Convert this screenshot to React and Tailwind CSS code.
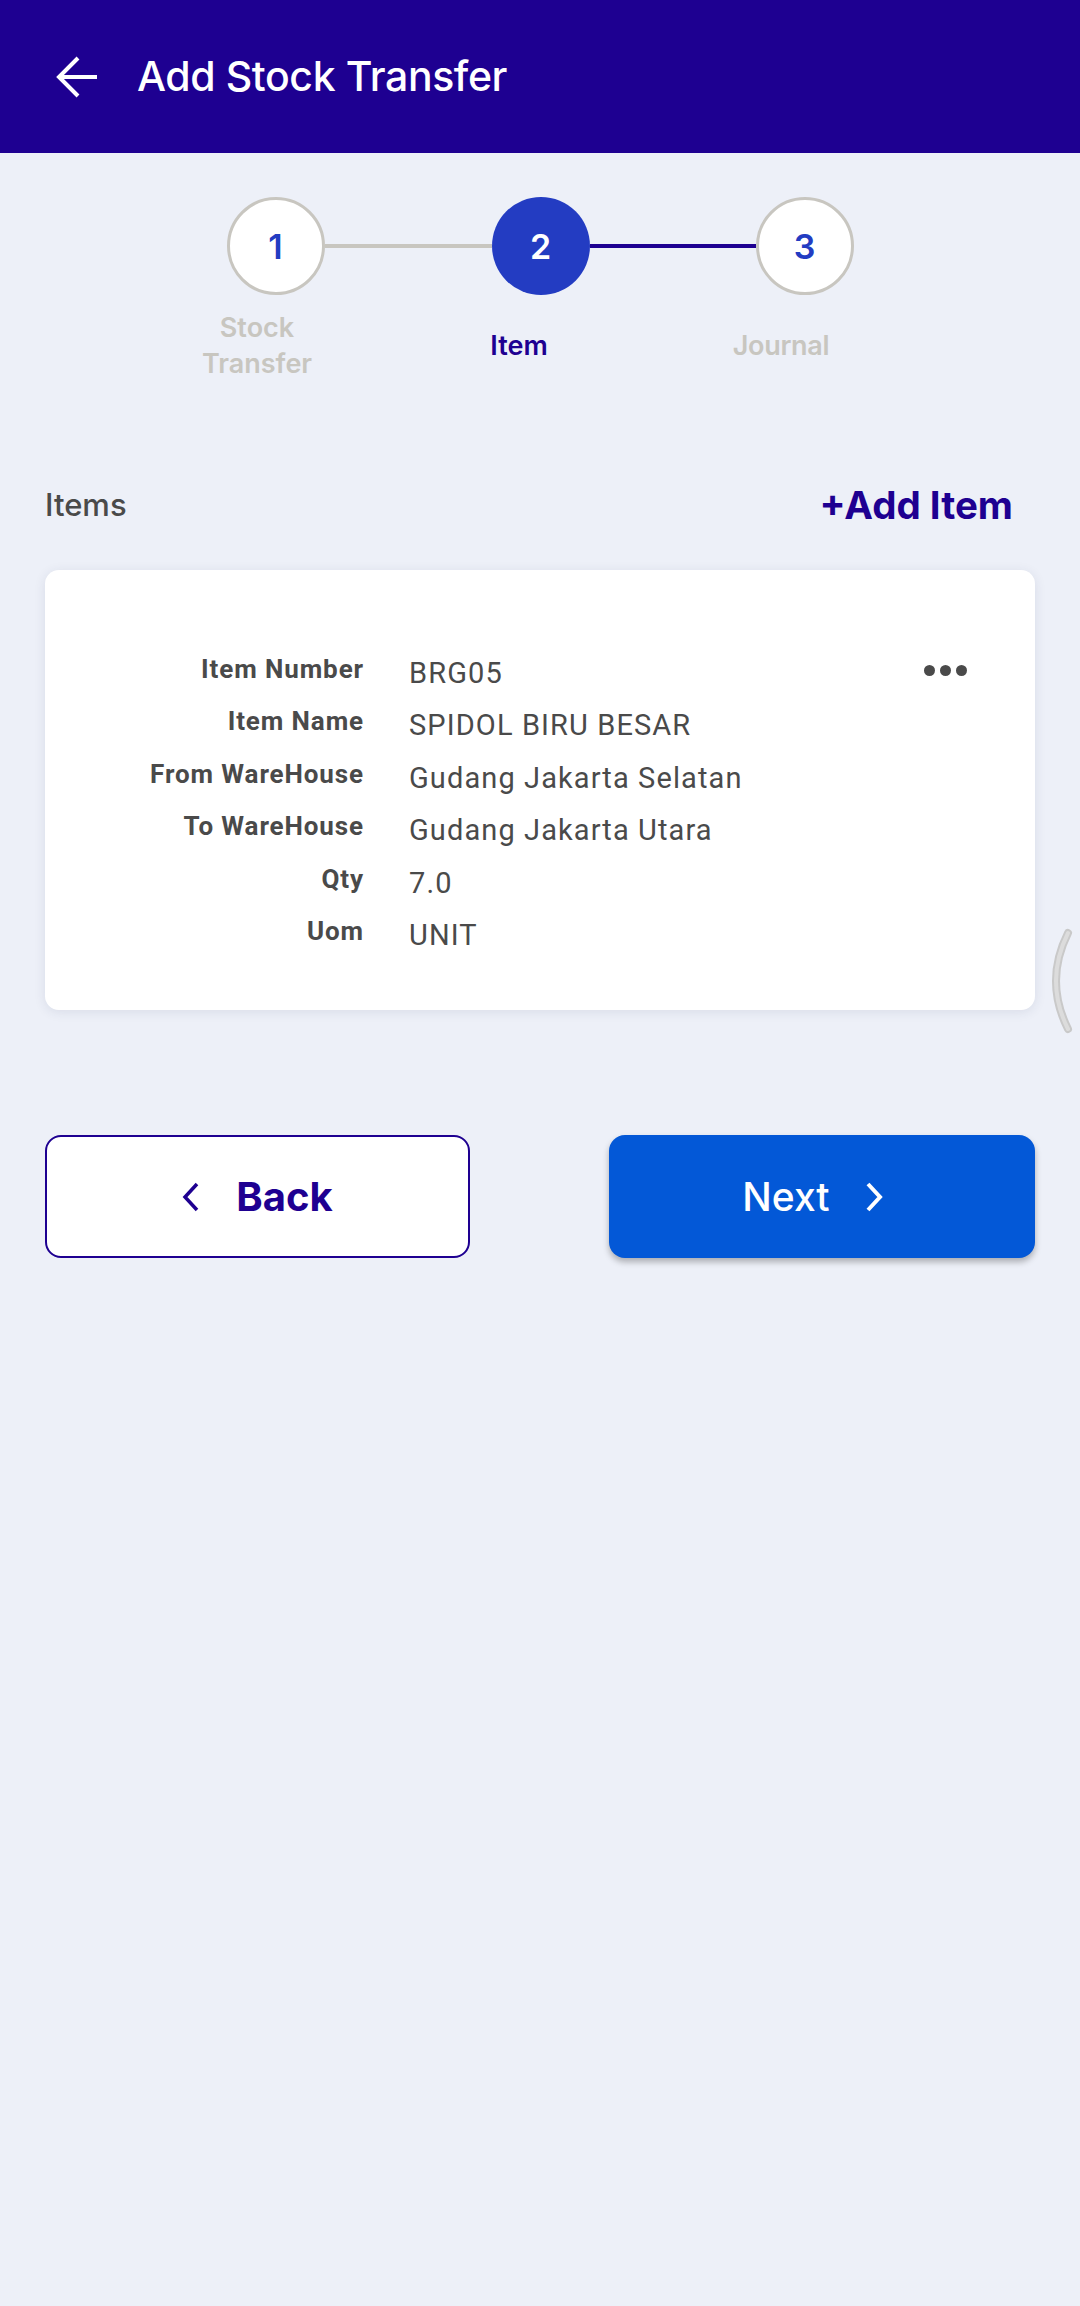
import React from 'react';

const ROWS = [
  ['Item Number', 'BRG05'],
  ['Item Name', 'SPIDOL BIRU BESAR'],
  ['From WareHouse', 'Gudang Jakarta Selatan'],
  ['To WareHouse', 'Gudang Jakarta Utara'],
  ['Qty', '7.0'],
  ['Uom', 'UNIT'],
];

const StepCircle = ({ n, active }) => (
  <div
    className={
      active
        ? 'w-[98px] h-[98px] rounded-full bg-[#233cc2] flex items-center justify-center text-[34px] font-semibold text-white'
        : 'w-[98px] h-[98px] rounded-full border-[3px] border-[#c8c6c0] bg-white flex items-center justify-center text-[34px] font-semibold text-[#233cc2]'
    }
  >
    {n}
  </div>
);

const App = () => {
  return (
    <div
      className="relative min-h-[2306px] bg-[#edf0f8]"
      style={{ fontFamily: 'Inter, "Noto Sans", sans-serif' }}
    >
      {/* header */}
      <div className="h-[153px] bg-[#1e0091] flex items-center">
        <svg width="60" height="60" viewBox="0 0 60 60" className="ml-[47px]">
          <path d="M50 30 H12 M31 11 L12 30 L31 49" fill="none" stroke="white" strokeWidth="4" />
        </svg>
        <h1 className="ml-[30px] text-[41px] font-medium text-white tracking-[-0.4px]">Add Stock Transfer</h1>
      </div>

      {/* stepper */}
      <div className="mt-[44px] flex items-center justify-center">
        <StepCircle n="1" />
        <div className="w-[167px] h-[4px] bg-[#c8c6c0]" />
        <StepCircle n="2" active />
        <div className="w-[166px] h-[4px] bg-[#1e0091]" />
        <StepCircle n="3" />
      </div>
      <div className="mt-[15px] h-[72px] flex items-center justify-center pr-[42px] text-[27px] leading-[36px] font-semibold">
        <div className="w-[262px] text-center text-[#c8c6c0]">Stock<br />Transfer</div>
        <div className="w-[262px] text-center text-[#1e0091]">Item</div>
        <div className="w-[262px] text-center text-[#c8c6c0] tracking-[-0.3px]">Journal</div>
      </div>

      {/* items header */}
      <div className="mt-[100px] h-[46px] flex items-center justify-between pl-[45px] pr-[67px]">
        <span className="text-[31px] leading-[46px] font-medium text-[#4a4a4a]">Items</span>
        <span className="text-[38.5px] leading-[46px] font-bold text-[#1e0091]">+Add Item</span>
      </div>

      {/* card */}
      <div className="mx-[45px] mt-[42px] bg-white rounded-[14px] shadow-[0_2px_12px_rgba(40,50,90,0.10)] pt-[77px] pb-[49px] pr-[68px]">
        {ROWS.map(([label, value], i) => (
          <div key={label} className="flex items-start h-[52.4px]" style={{ fontFamily: 'Roboto, "Liberation Sans", sans-serif' }}>
            <div className="w-[319px] text-right text-[26px] leading-[44px] font-bold tracking-[0.9px] text-[#4a4a4a]">{label}</div>
            <div className="ml-[45px] text-[29px] leading-[52px] tracking-[1.1px] text-[#4a4a4a]">{value}</div>
            {i === 0 && (
              <div className="ml-auto mt-[18px] flex gap-[5px]">
                <span className="w-[11px] h-[11px] rounded-full bg-[#4a4a4a]" />
                <span className="w-[11px] h-[11px] rounded-full bg-[#4a4a4a]" />
                <span className="w-[11px] h-[11px] rounded-full bg-[#4a4a4a]" />
              </div>
            )}
          </div>
        ))}
      </div>

      {/* buttons */}
      <div className="mt-[125px] flex justify-between px-[45px]">
        <button className="w-[425px] h-[123px] rounded-[16px] border-[2.5px] border-[#1e0091] bg-white flex items-center justify-center gap-[36px] text-[#1e0091]">
          <svg width="18" height="30" viewBox="0 0 18 30">
            <path d="M15 2 L3 15 L15 28" fill="none" stroke="#1e0091" strokeWidth="3.5" />
          </svg>
          <span className="text-[40px] font-bold">Back</span>
        </button>
        <button className="w-[426px] h-[123px] rounded-[16px] bg-[#0358d7] shadow-[0_4px_6px_rgba(0,0,0,0.28)] flex items-center justify-center gap-[34px] pr-[18px] text-white">
          <span className="text-[39px] font-medium">Next</span>
          <svg width="20" height="30" viewBox="0 0 20 30">
            <path d="M4 2 L16 15 L4 28" fill="none" stroke="white" strokeWidth="4" />
          </svg>
        </button>
      </div>

      {/* overscroll indicator */}
      <svg width="30" height="110" viewBox="0 0 30 110" className="absolute left-[1046px] top-[927px]">
        <path d="M22 6 Q -2 54 22 102" fill="none" stroke="#c9c9c9" strokeWidth="8" strokeLinecap="round" />
        <path d="M22 6 Q -2 54 22 102" fill="none" stroke="#dcdcdc" strokeWidth="4" strokeLinecap="round" />
      </svg>
    </div>
  );
};

export default App;
